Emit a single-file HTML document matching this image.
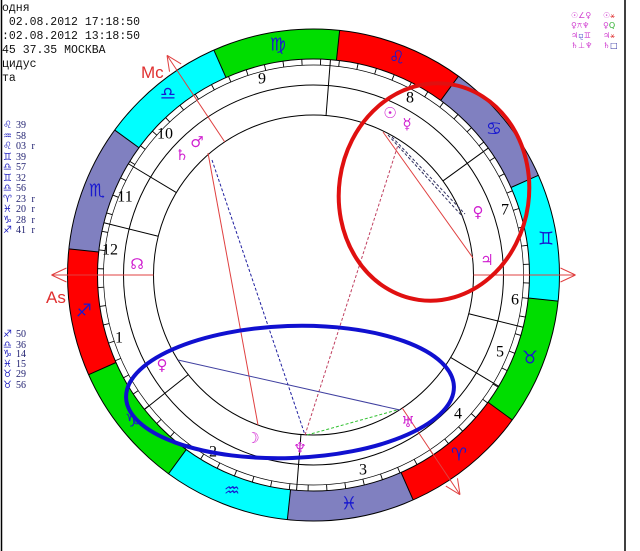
<!DOCTYPE html>
<html><head><meta charset="utf-8"><style>
html,body{margin:0;padding:0;background:#fff;width:640px;height:551px;overflow:hidden;}
body{position:relative;}
.t{position:absolute;left:2px;top:2px;font-family:"Liberation Mono","DejaVu Sans Mono",monospace;font-size:11.5px;color:#111;white-space:pre;line-height:14px;margin:0;}
</style></head><body>
<div class="t">одня
 02.08.2012 17:18:50
:02.08.2012 13:18:50
45 37.35 МОСКВА
цидус
та</div>
<svg width="640" height="551" style="position:absolute;left:0;top:0;display:block" font-family="DejaVu Sans, sans-serif">
<line x1="1.5" y1="0" x2="1.5" y2="551" stroke="#000" stroke-width="1.5"/>
<line x1="625" y1="0" x2="625" y2="551" stroke="#000" stroke-width="1.5"/>
<g font-size="10" fill="#2020c0">
<text x="3" y="128">♌</text><text x="3" y="139">♒</text><text x="3" y="149">♌</text><text x="3" y="160">♊</text><text x="3" y="170">♎</text><text x="3" y="181">♊</text><text x="3" y="191">♎</text><text x="3" y="202">♈</text><text x="3" y="212">♓</text><text x="3" y="223">♑</text><text x="3" y="233">♐</text>
<text x="3" y="337">♐</text><text x="3" y="348">♎</text><text x="3" y="357">♑</text><text x="3" y="367">♓</text><text x="3" y="377">♉</text><text x="3" y="388">♉</text>
</g>
<g font-family="Liberation Serif, serif" font-size="10" fill="#202070">
<text x="16" y="128">39</text><text x="16" y="139">58</text><text x="16" y="149">03 <tspan dx="3">r</tspan></text><text x="16" y="160">39</text><text x="16" y="170">57</text><text x="16" y="181">32</text><text x="16" y="191">56</text><text x="16" y="202">23 <tspan dx="3">r</tspan></text><text x="16" y="212">20 <tspan dx="3">r</tspan></text><text x="16" y="223">28 <tspan dx="3">r</tspan></text><text x="16" y="233">41 <tspan dx="3">r</tspan></text>
<text x="16" y="337">50</text><text x="16" y="348">36</text><text x="16" y="357">14</text><text x="16" y="367">15</text><text x="16" y="377">29</text><text x="16" y="388">56</text>
</g>
<g font-size="8" fill="#d040d0">
<text x="571" y="18">☉∠♀</text><text x="603" y="18">☉<tspan fill="#e03030">⚹</tspan></text>
<text x="571" y="28">♀⚻♆</text><text x="603" y="28">♀<tspan fill="#30b030">Q</tspan></text>
<text x="571" y="38">♃<tspan fill="#6060d0">⚼</tspan>♊</text><text x="603" y="38">♃<tspan fill="#e03030">⚹</tspan></text>
<text x="571" y="48">♄⊥♆</text><text x="603" y="48">♄<tspan fill="#3030a0">□</tspan></text>
</g>
<g transform="translate(313.5 275)">
<g fill="none" stroke-width="30">
<circle r="231" stroke="#00dd00" stroke-dasharray="120.95 362.85" transform="rotate(6.1)"/>
<circle r="231" stroke="#ff0000" stroke-dasharray="120.95 362.85" transform="rotate(36.1)"/>
<circle r="231" stroke="#8080c0" stroke-dasharray="120.95 362.85" transform="rotate(66.1)"/>
<circle r="231" stroke="#00ffff" stroke-dasharray="120.95 362.85" transform="rotate(96.1)"/>
</g>
<g fill="none" stroke="#000" stroke-width="1">
<circle r="246"/><circle r="216"/><circle r="210" stroke-width="0.7"/><circle r="190"/><circle r="160"/>
<circle r="213" stroke-width="6" stroke-dasharray="0.9 17.73" transform="rotate(6.1)"/>
</g>
<g stroke="#000" stroke-width="1">
<line x1="216" x2="246" transform="rotate(6.1)"/><line x1="216" x2="246" transform="rotate(36.1)"/><line x1="216" x2="246" transform="rotate(66.1)"/><line x1="216" x2="246" transform="rotate(96.1)"/><line x1="216" x2="246" transform="rotate(126.1)"/><line x1="216" x2="246" transform="rotate(156.1)"/><line x1="216" x2="246" transform="rotate(186.1)"/><line x1="216" x2="246" transform="rotate(216.1)"/><line x1="216" x2="246" transform="rotate(246.1)"/><line x1="216" x2="246" transform="rotate(276.1)"/><line x1="216" x2="246" transform="rotate(306.1)"/><line x1="216" x2="246" transform="rotate(336.1)"/>
<line x1="160" x2="216" transform="rotate(194)"/><line x1="160" x2="216" transform="rotate(211)"/><line x1="160" x2="216" transform="rotate(274.5)"/><line x1="160" x2="216" transform="rotate(324)"/><line x1="160" x2="216" transform="rotate(14)"/><line x1="160" x2="216" transform="rotate(31)"/><line x1="160" x2="216" transform="rotate(94.5)"/><line x1="160" x2="216" transform="rotate(141.5)"/>
</g>
<g stroke="#e04040" stroke-width="1" fill="none">
<line x1="160" x2="262" transform="rotate(180)"/><path d="M262 0 L247 -7 M262 0 L247 7" transform="rotate(180)"/>
<line x1="160" x2="262" transform="rotate(0)"/><path d="M262 0 L247 -7 M262 0 L247 7" transform="rotate(0)"/>
<line x1="160" x2="264" transform="rotate(236.3)"/><path d="M264 0 L249 -7 M264 0 L249 7" transform="rotate(236.3)"/>
<line x1="160" x2="264" transform="rotate(56.3)"/><path d="M264 0 L249 -7 M264 0 L249 7" transform="rotate(56.3)"/>
</g>
</g>
<g font-size="18" fill="#1818d0" text-anchor="middle" dominant-baseline="central">
<text x="530" y="358">♉&#xFE0E;</text><text x="459" y="455">♈&#xFE0E;</text><text x="349" y="504">♓&#xFE0E;</text><text x="232" y="491">♒&#xFE0E;</text><text x="133" y="421">♑&#xFE0E;</text><text x="84" y="311">♐&#xFE0E;</text><text x="97" y="191">♏&#xFE0E;</text><text x="168" y="94">♎&#xFE0E;</text><text x="278" y="45">♍&#xFE0E;</text><text x="397" y="58">♌&#xFE0E;</text><text x="494" y="129">♋&#xFE0E;</text><text x="546" y="239">♊&#xFE0E;</text>
</g>
<g font-family="Liberation Sans, sans-serif" fill="#e03030" font-size="17">
<text x="141" y="78">Mc</text><text x="46" y="303">As</text>
</g>
<g font-family="Liberation Serif, serif" font-size="16" fill="#000" text-anchor="middle" dominant-baseline="central">
<text x="262" y="79">9</text><text x="410" y="98">8</text><text x="165" y="134">10</text><text x="125" y="197">11</text><text x="110" y="250">12</text><text x="119" y="338">1</text><text x="213" y="452">2</text><text x="363" y="470">3</text><text x="458" y="414">4</text><text x="500" y="352">5</text><text x="515" y="300">6</text><text x="505" y="210">7</text>
</g>
<g stroke-width="1" fill="none">
<line x1="208" y1="153" x2="258" y2="425" stroke="#e04040"/>
<line x1="212" y1="160" x2="305" y2="435" stroke="#2020a0" stroke-dasharray="3 2"/>
<line x1="305" y1="435" x2="398" y2="145" stroke="#c04060" stroke-dasharray="3 2"/>
<line x1="383" y1="132" x2="473" y2="258" stroke="#e04040"/>
<line x1="388" y1="135" x2="463" y2="217" stroke="#303060" stroke-dasharray="3 2"/>
<line x1="392" y1="137" x2="465" y2="214" stroke="#303060" stroke-dasharray="3 2"/>
<line x1="178" y1="360" x2="400" y2="410" stroke="#4040a0"/>
<line x1="307" y1="435" x2="397" y2="410" stroke="#30c030" stroke-dasharray="3 2"/>
</g>
<g font-size="15" fill="#d020d0" text-anchor="middle" dominant-baseline="central">
<text x="390" y="113">☉</text><text x="407" y="124">☿</text><text x="478" y="212">♀</text><text x="487" y="260">♃</text><text x="137" y="264">☊</text><text x="182" y="155">♄</text><text x="197" y="142">♂</text><text x="162" y="365">♀</text><text x="253" y="438">☽</text><text x="300" y="448">♆</text><text x="408" y="422">♅</text>
</g>
<ellipse cx="434" cy="192" rx="95" ry="109" fill="none" stroke="#e01010" stroke-width="4" transform="rotate(8 434 192)"/>
<ellipse cx="290" cy="392" rx="164" ry="66" fill="none" stroke="#1010d0" stroke-width="4" transform="rotate(-2 290 392)"/>
</svg>
</body></html>
